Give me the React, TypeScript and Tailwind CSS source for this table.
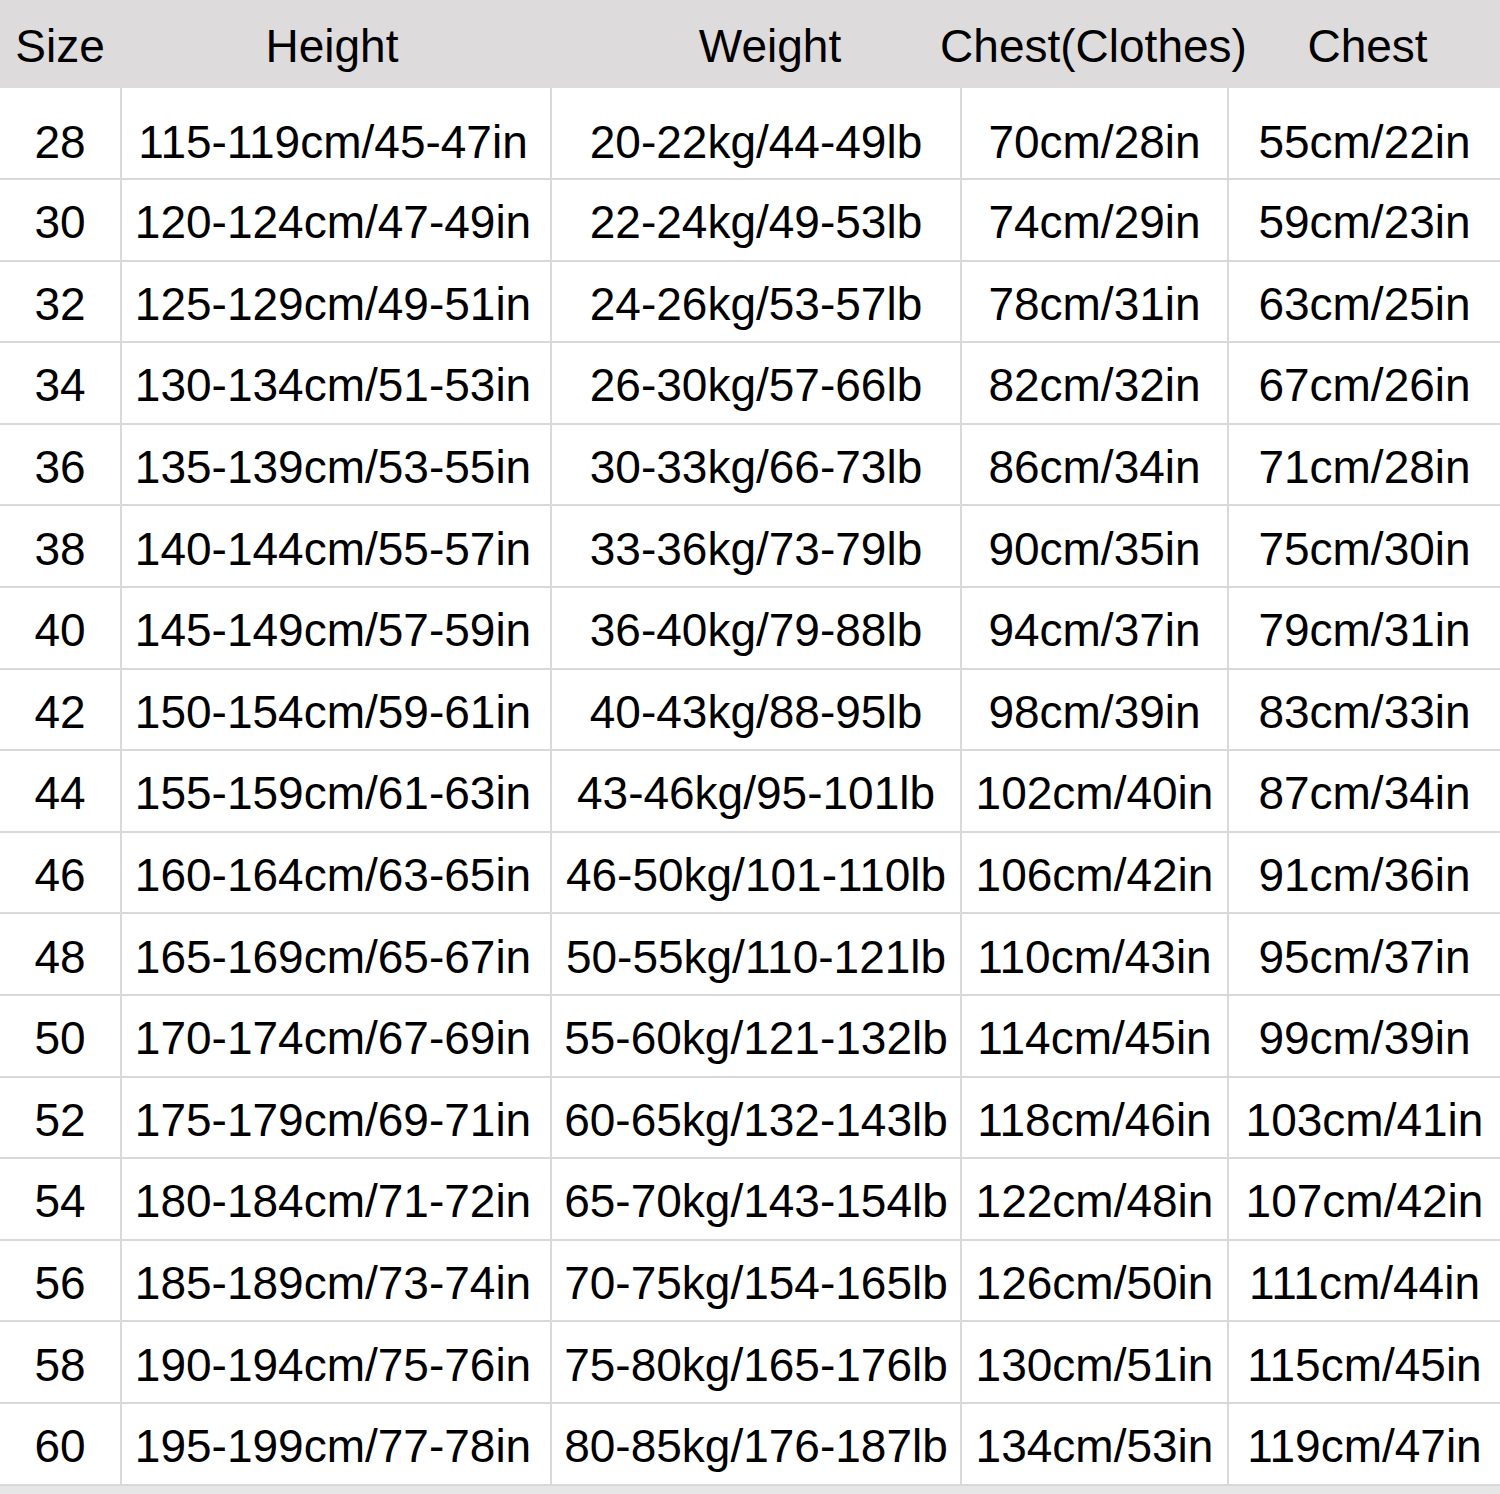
import React from "react";

const rows: string[][] = [
  ["28", "115-119cm/45-47in", "20-22kg/44-49lb", "70cm/28in", "55cm/22in"],
  ["30", "120-124cm/47-49in", "22-24kg/49-53lb", "74cm/29in", "59cm/23in"],
  ["32", "125-129cm/49-51in", "24-26kg/53-57lb", "78cm/31in", "63cm/25in"],
  ["34", "130-134cm/51-53in", "26-30kg/57-66lb", "82cm/32in", "67cm/26in"],
  ["36", "135-139cm/53-55in", "30-33kg/66-73lb", "86cm/34in", "71cm/28in"],
  ["38", "140-144cm/55-57in", "33-36kg/73-79lb", "90cm/35in", "75cm/30in"],
  ["40", "145-149cm/57-59in", "36-40kg/79-88lb", "94cm/37in", "79cm/31in"],
  ["42", "150-154cm/59-61in", "40-43kg/88-95lb", "98cm/39in", "83cm/33in"],
  ["44", "155-159cm/61-63in", "43-46kg/95-101lb", "102cm/40in", "87cm/34in"],
  ["46", "160-164cm/63-65in", "46-50kg/101-110lb", "106cm/42in", "91cm/36in"],
  ["48", "165-169cm/65-67in", "50-55kg/110-121lb", "110cm/43in", "95cm/37in"],
  ["50", "170-174cm/67-69in", "55-60kg/121-132lb", "114cm/45in", "99cm/39in"],
  ["52", "175-179cm/69-71in", "60-65kg/132-143lb", "118cm/46in", "103cm/41in"],
  ["54", "180-184cm/71-72in", "65-70kg/143-154lb", "122cm/48in", "107cm/42in"],
  ["56", "185-189cm/73-74in", "70-75kg/154-165lb", "126cm/50in", "111cm/44in"],
  ["58", "190-194cm/75-76in", "75-80kg/165-176lb", "130cm/51in", "115cm/45in"],
  ["60", "195-199cm/77-78in", "80-85kg/176-187lb", "134cm/53in", "119cm/47in"],
];

const widths = ["w-[120px]", "w-[430px] pr-[6px]", "w-[410px]", "w-[267px]", "flex-1"];

export default function App() {
  return (
    <div
      className="w-[1500px] h-[1494px] bg-white text-black text-[46px] leading-normal overflow-hidden"
      style={{ fontFamily: '"Liberation Sans", Arial, sans-serif' }}
    >
      <div className="flex h-[88px] bg-[#dedbdc] items-center pt-[4px]">
        <div className="w-[120px] flex justify-center">Size</div>
        <div className="w-[430px] flex justify-center pr-[6px]">Height</div>
        <div className="w-[410px] flex justify-center pl-[30px]">Weight</div>
        <div className="w-[267px] flex justify-center whitespace-nowrap">Chest(Clothes)</div>
        <div className="flex-1 flex justify-center pl-[8px]">Chest</div>
      </div>
      {rows.map((r, i) => (
        <div
          key={i}
          className={`flex border-b-2 border-[#d9d9d9] ${i === 0 ? "h-[92px]" : "h-[81.6px]"}`}
        >
          {r.map((c, j) => (
            <div
              key={j}
              className={`${widths[j]} flex items-center justify-center whitespace-nowrap ${
                j > 0 ? "border-l-2 border-[#d9d9d9]" : ""
              } ${i === 0 ? "pt-[19px]" : "pt-[6px]"}`}
            >
              {c}
            </div>
          ))}
        </div>
      ))}
      <div className="h-[9px] bg-[#e6e6e6]" />
    </div>
  );
}
